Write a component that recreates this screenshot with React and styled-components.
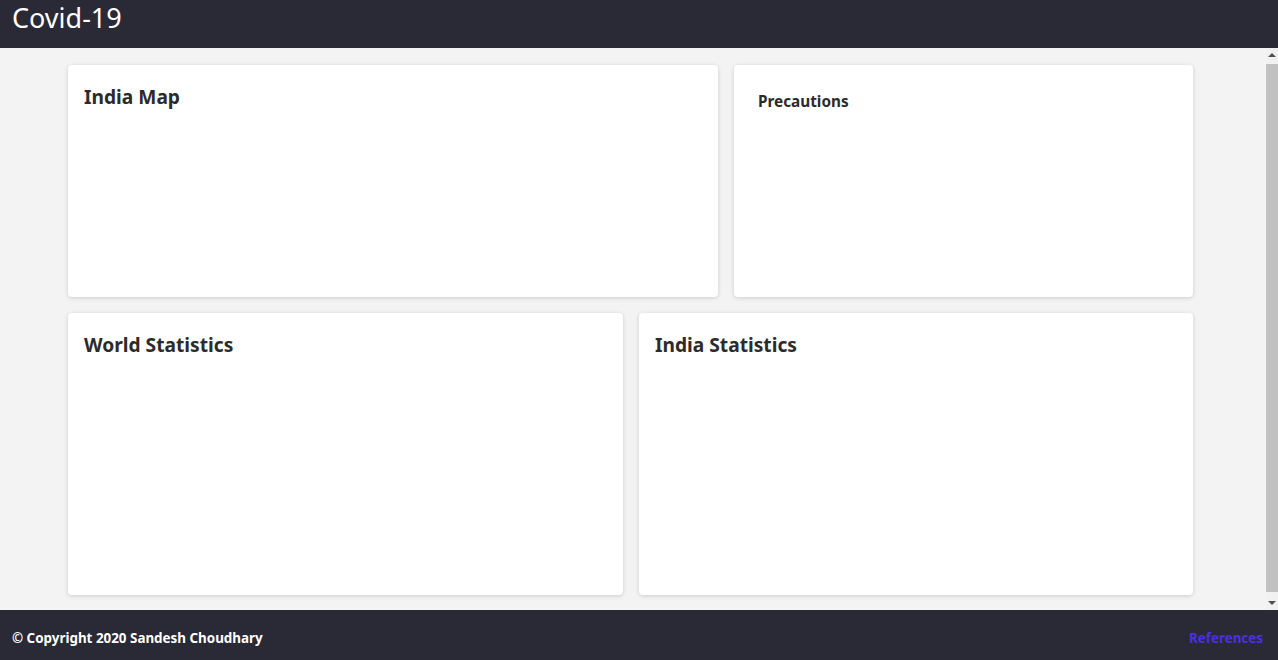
import React from 'react';
import styled, { createGlobalStyle } from 'styled-components';

const DARK = '#2a2a37';

const GlobalStyle = createGlobalStyle`
    html, body {
        margin: 0;
        padding: 0;
        height: 100%;
        overflow: hidden;
        font-family: "Noto Sans", "Open Sans", sans-serif;
    }
    #root {
        height: 100%;
    }
`;

const Page = styled.div`
    height: 100vh;
    display: flex;
    flex-direction: column;
`;

const Header = styled.header`
    height: 48px;
    flex-shrink: 0;
    background: ${DARK};
    color: #ffffff;
    display: flex;
    align-items: flex-start;
    padding: 0 12px;

    h1 {
        margin: 0;
        margin-top: 2px;
        font-size: 27px;
        font-weight: 400;
        line-height: 32px;
    }
`;

const Body = styled.div`
    flex: 1;
    min-height: 0;
    display: flex;
    background: #f3f3f3;
`;

const Main = styled.main`
    flex: 1;
    overflow: hidden;
`;

const ScrollBar = styled.div`
    width: 12px;
    flex-shrink: 0;
    background: #f1f1f1;
    display: flex;
    flex-direction: column;
    align-items: stretch;
`;

const Arrow = styled.div`
    height: 14px;
    display: flex;
    align-items: center;
    justify-content: center;

    &::before {
        content: '';
        width: 0;
        height: 0;
        border-left: 4px solid transparent;
        border-right: 4px solid transparent;
        ${p => (p.$down ? 'border-top: 4px solid #505050;' : 'border-bottom: 4px solid #505050;')}
    }
`;

const Thumb = styled.div`
    flex: 1;
    background: #c1c1c1;
    margin: 2px 0 4px;
`;

const Content = styled.div`
    padding: 17px 0 18px 68px;
    display: flex;
    flex-direction: column;
    gap: 16px;
`;

const Row = styled.div`
    display: grid;
    grid-template-columns: ${p => p.$cols};
    gap: 16px;
`;

const Card = styled.section`
    background: #ffffff;
    border-radius: 4px;
    box-shadow: 0 1px 4px rgba(0, 0, 0, 0.16);
    height: ${p => p.$height}px;
    box-sizing: border-box;
    padding: ${p => (p.$small ? '27px 24px' : '20px 16px')};

    h2 {
        margin: 0;
        color: #2b2b2b;
        font-size: ${p => (p.$small ? '15.3px' : '19.2px')};
        font-weight: 700;
        line-height: 1.3;
    }
`;

const Footer = styled.footer`
    height: 50px;
    flex-shrink: 0;
    box-sizing: border-box;
    background: ${DARK};
    display: flex;
    align-items: center;
    justify-content: space-between;
    padding: 5px 15px 0 12px;
    font-size: 13.4px;
    font-weight: 700;

    span {
        color: #ffffff;
    }
    a {
        color: #4b2fe3;
        text-decoration: none;
    }
`;

const App = () => {
    return (
        <>
            <GlobalStyle />
            <Page>
                <Header>
                    <h1>Covid-19</h1>
                </Header>
                <Body>
                    <Main>
                        <Content>
                            <Row $cols="650px 459px">
                                <Card $height={232}>
                                    <h2>India Map</h2>
                                </Card>
                                <Card $height={232} $small>
                                    <h2>Precautions</h2>
                                </Card>
                            </Row>
                            <Row $cols="555px 554px">
                                <Card $height={282}>
                                    <h2>World Statistics</h2>
                                </Card>
                                <Card $height={282}>
                                    <h2>India Statistics</h2>
                                </Card>
                            </Row>
                        </Content>
                    </Main>
                    <ScrollBar>
                        <Arrow />
                        <Thumb />
                        <Arrow $down />
                    </ScrollBar>
                </Body>
                <Footer>
                    <span>© Copyright 2020 Sandesh Choudhary</span>
                    <a href="#">References</a>
                </Footer>
            </Page>
        </>
    );
};

export default App;
